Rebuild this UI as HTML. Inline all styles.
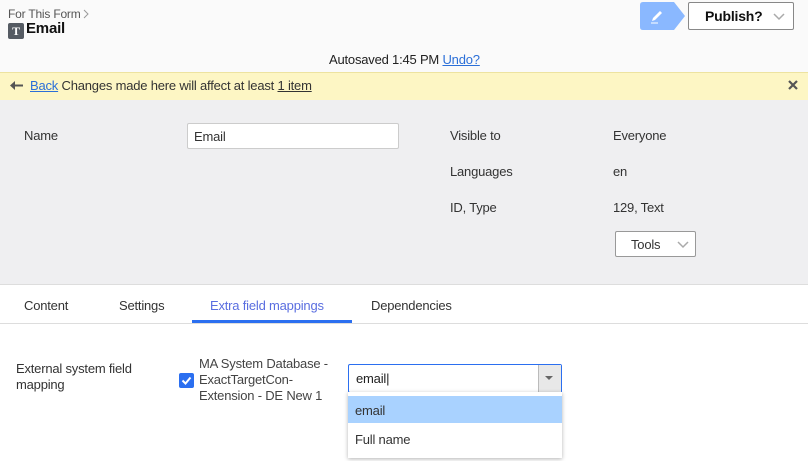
<!DOCTYPE html>
<html><head><style>
*{box-sizing:border-box;margin:0;padding:0}
body{width:808px;height:461px;overflow:hidden;font-family:"Liberation Sans",sans-serif;font-size:13px;color:#333;background:#fff;position:relative;letter-spacing:-0.2px}
.a{position:absolute;white-space:nowrap}
</style></head><body>
<div class="a" style="left:0;top:0;width:808px;height:72px;background:#fafafa"></div>
<div class="a" style="left:8px;top:7px;font-size:12px;color:#555">For This Form</div>
<svg class="a" style="left:83px;top:9px" width="6" height="10"><path d="M1 1l4 4-4 4" stroke="#999" fill="none"/></svg>
<div class="a" style="left:8px;top:23px;width:16px;height:16px;background:#555b63;border-radius:2px;color:#fff;font-family:'Liberation Serif',serif;font-weight:bold;font-size:12px;text-align:center;line-height:16px">T</div>
<div class="a" style="left:26px;top:20px;font-size:15px;font-weight:bold;color:#111">Email</div>
<svg class="a" style="left:640px;top:2px" width="46" height="28"><path d="M3 0H34L45 14L34 28H3Q0 28 0 25V3Q0 0 3 0Z" fill="#8ab8ff"/><path d="M12 19l1-3 7-7 2 2-7 7z" fill="#fff"/><path d="M11 21h7" stroke="#fff" stroke-width="1"/></svg>
<div class="a" style="left:688px;top:2px;width:106px;height:28px;border:1px solid #888;border-radius:2px;background:#fff"></div>
<div class="a" style="left:705px;top:8px;font-size:14px;font-weight:bold;color:#111">Publish?</div>
<svg class="a" style="left:773px;top:13px" width="12" height="8"><path d="M1 1l5 5 5-5" stroke="#aaa" stroke-width="1.5" fill="none"/></svg>
<div class="a" style="left:329px;top:52px;color:#222">Autosaved 1:45 PM <span style="color:#2b6fd8;text-decoration:underline">Undo?</span></div>
<div class="a" style="left:0;top:72px;width:808px;height:28px;background:#fdf6c4;border-top:1px solid #ede3a0"></div>
<svg class="a" style="left:10px;top:81px" width="13" height="9"><path d="M0 4.5L5 0v3.5h8v2H5V9z" fill="#555"/></svg>
<div class="a" style="left:30px;top:78px"><span style="color:#2b6fd8;text-decoration:underline">Back</span> Changes made here will affect at least <span style="text-decoration:underline">1 item</span></div>
<svg class="a" style="left:788px;top:80px" width="10" height="10"><path d="M1 1l8 8M9 1l-8 8" stroke="#555" stroke-width="2.2"/></svg>
<div class="a" style="left:0;top:100px;width:808px;height:185px;background:#efeff1;border-bottom:1px solid #ddd"></div>
<div class="a" style="left:24px;top:128px">Name</div>
<div class="a" style="left:187px;top:123px;width:212px;height:26px;background:#fff;border:1px solid #ccc;border-radius:2px;padding:5px 6px">Email</div>
<div class="a" style="left:450px;top:128px">Visible to</div>
<div class="a" style="left:613px;top:128px">Everyone</div>
<div class="a" style="left:450px;top:164px">Languages</div>
<div class="a" style="left:613px;top:164px">en</div>
<div class="a" style="left:450px;top:200px">ID, Type</div>
<div class="a" style="left:613px;top:200px">129, Text</div>
<div class="a" style="left:615px;top:231px;width:81px;height:26px;background:#fff;border:1px solid #999;border-radius:2px"></div>
<div class="a" style="left:631px;top:237px">Tools</div>
<svg class="a" style="left:677px;top:241px" width="12" height="8"><path d="M1 1l5 5 5-5" stroke="#aaa" stroke-width="1.5" fill="none"/></svg>
<div class="a" style="left:24px;top:298px">Content</div>
<div class="a" style="left:119px;top:298px">Settings</div>
<div class="a" style="left:210px;top:298px;color:#5a6ee0">Extra field mappings</div>
<div class="a" style="left:371px;top:298px">Dependencies</div>
<div class="a" style="left:192px;top:320px;width:160px;height:3px;background:#2b6ff0"></div>
<div class="a" style="left:0;top:323px;width:808px;height:1px;background:#ddd"></div>
<div class="a" style="left:16px;top:361px;line-height:16px;white-space:normal;width:140px">External system field<br>mapping</div>
<div class="a" style="left:179px;top:373px;width:15px;height:15px;background:#2b6ff0;border-radius:2px"></div>
<svg class="a" style="left:179px;top:373px" width="15" height="15"><path d="M3.5 7.5l3 3 5-6" stroke="#fff" stroke-width="2" fill="none"/></svg>
<div class="a" style="left:199px;top:356px;line-height:16px;color:#444">MA System Database -<br>ExactTargetCon-<br>Extension - DE New 1</div>
<div class="a" style="left:348px;top:364px;width:214px;height:29px;border:1px solid #2b6ff0;border-radius:2px;background:#fff"></div>
<div class="a" style="left:356px;top:371px;color:#222">email|</div>
<div class="a" style="left:538px;top:365px;width:23px;height:27px;background:#e8e8e8;border-left:1px solid #bbb"></div>
<svg class="a" style="left:545px;top:376px" width="8" height="5"><path d="M0 0h8L4 4z" fill="#666"/></svg>
<div class="a" style="left:348px;top:392px;width:214px;height:66px;background:#fff;box-shadow:0 1px 4px rgba(0,0,0,.3)"></div>
<div class="a" style="left:348px;top:396px;width:214px;height:27px;background:#a9d2ff"></div>
<div class="a" style="left:355px;top:403px">email</div>
<div class="a" style="left:355px;top:432px">Full name</div>
</body></html>
